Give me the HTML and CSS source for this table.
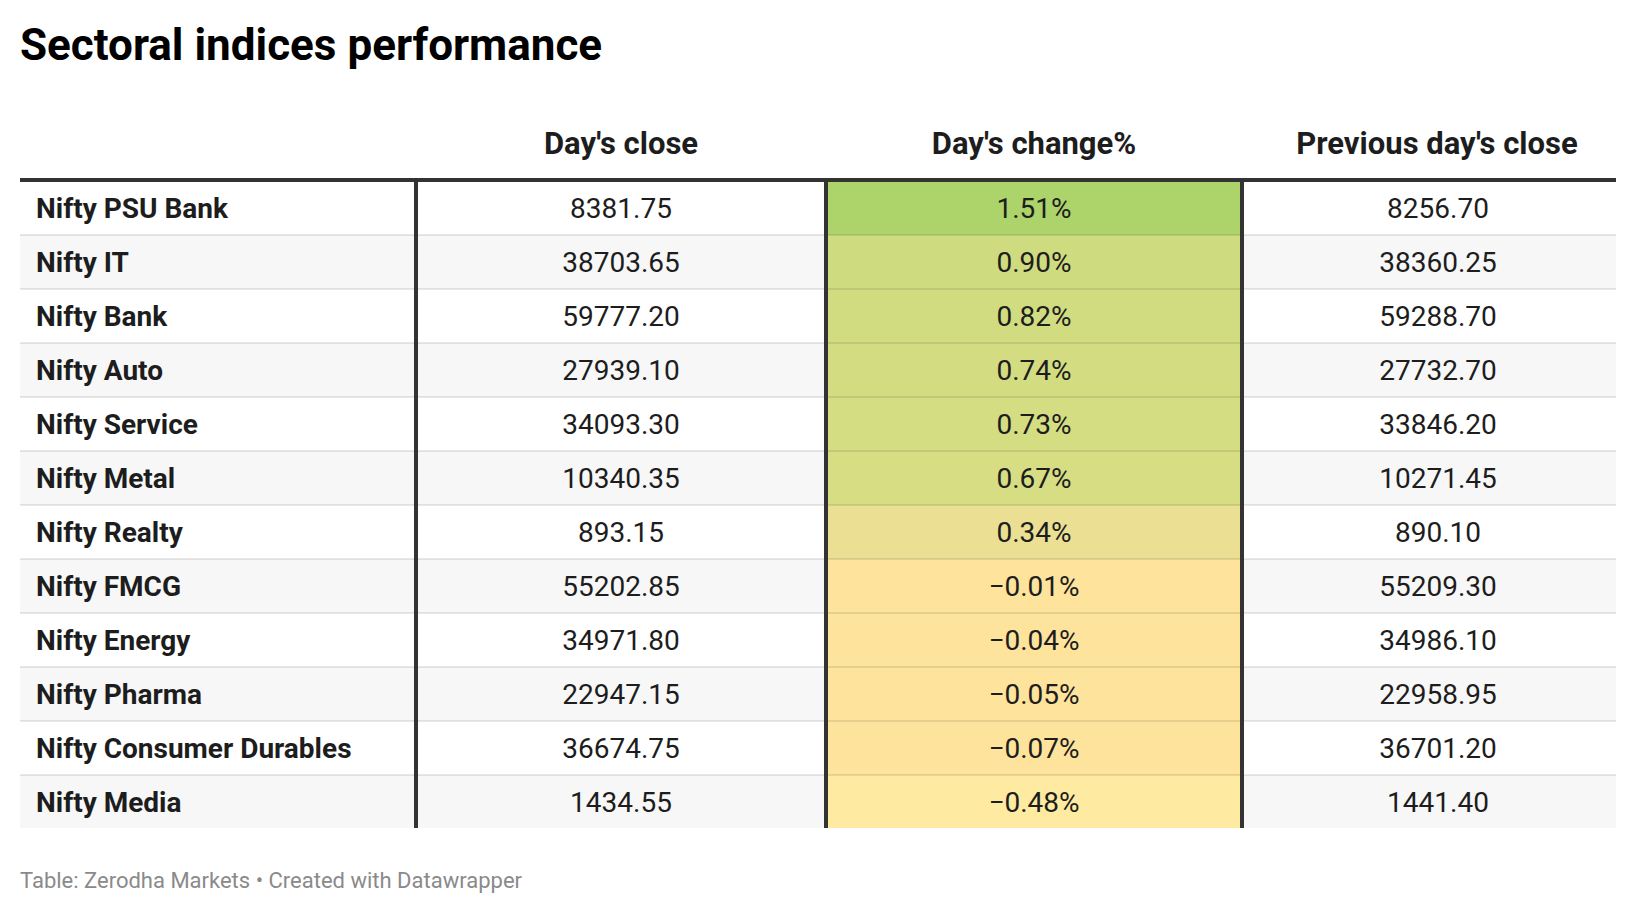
FILE: index.html
```html
<!DOCTYPE html>
<html lang="en">
<head>
<meta charset="utf-8">
<title>Sectoral indices performance</title>
<link rel="stylesheet" href="styles.css">
</head>
<body>
<div class="chart">
  <h1 class="title">Sectoral indices performance</h1>
  <table class="tbl">
    <colgroup>
      <col class="c-name">
      <col class="c-close">
      <col class="c-change">
      <col class="c-prev">
    </colgroup>
    <thead>
      <tr>
        <th class="h-name"></th>
        <th>Day's close</th>
        <th>Day's change%</th>
        <th class="h-prev">Previous day's close</th>
      </tr>
    </thead>
    <tbody>
      <tr><td class="name">Nifty PSU Bank</td><td class="num">8381.75</td><td class="chg g1">1.51%</td><td class="num prev">8256.70</td></tr>
      <tr><td class="name">Nifty IT</td><td class="num">38703.65</td><td class="chg g2">0.90%</td><td class="num prev">38360.25</td></tr>
      <tr><td class="name">Nifty Bank</td><td class="num">59777.20</td><td class="chg g3">0.82%</td><td class="num prev">59288.70</td></tr>
      <tr><td class="name">Nifty Auto</td><td class="num">27939.10</td><td class="chg g4">0.74%</td><td class="num prev">27732.70</td></tr>
      <tr><td class="name">Nifty Service</td><td class="num">34093.30</td><td class="chg g5">0.73%</td><td class="num prev">33846.20</td></tr>
      <tr><td class="name">Nifty Metal</td><td class="num">10340.35</td><td class="chg g6">0.67%</td><td class="num prev">10271.45</td></tr>
      <tr><td class="name">Nifty Realty</td><td class="num">893.15</td><td class="chg g7">0.34%</td><td class="num prev">890.10</td></tr>
      <tr><td class="name">Nifty FMCG</td><td class="num">55202.85</td><td class="chg g8">&minus;0.01%</td><td class="num prev">55209.30</td></tr>
      <tr><td class="name">Nifty Energy</td><td class="num">34971.80</td><td class="chg g8">&minus;0.04%</td><td class="num prev">34986.10</td></tr>
      <tr><td class="name">Nifty Pharma</td><td class="num">22947.15</td><td class="chg g8">&minus;0.05%</td><td class="num prev">22958.95</td></tr>
      <tr><td class="name">Nifty Consumer Durables</td><td class="num">36674.75</td><td class="chg g8">&minus;0.07%</td><td class="num prev">36701.20</td></tr>
      <tr><td class="name">Nifty Media</td><td class="num">1434.55</td><td class="chg g9">&minus;0.48%</td><td class="num prev">1441.40</td></tr>
    </tbody>
  </table>
  <p class="footer">Table: Zerodha Markets &bull; Created with Datawrapper</p>
</div>
</body>
</html>
```

FILE: styles.css
```css
html, body {
  margin: 0;
  padding: 0;
  background: #ffffff;
}

body {
  font-family: Roboto, "Liberation Sans", Arial, sans-serif;
  color: #1d1d1d;
}

.chart {
  padding: 19px 20px 0 20px;
}

.title {
  margin: 0;
  font-size: 44px;
  font-weight: 700;
  line-height: normal;
  color: #000000;
}

.tbl {
  margin-top: 54px;
  width: 1596px;
  border-collapse: collapse;
  table-layout: fixed;
}

.c-name { width: 396px; }
.c-close { width: 410px; }
.c-change { width: 416px; }
.c-prev { width: 374px; }

.tbl th {
  font-size: 31px;
  font-weight: 700;
  line-height: normal;
  text-align: center;
  padding: 0 0 16px 0;
  color: #1d1d1d;
  border-bottom: 4px solid #333333;
}

.tbl th.h-prev {
  padding-left: 16px;
}

.tbl td {
  height: 52px;
  padding: 0;
  font-size: 28px;
  line-height: normal;
  text-align: center;
  border-bottom: 2px solid rgba(0, 0, 0, 0.09);
  box-sizing: content-box;
}

.tbl tbody tr:nth-child(even) td {
  background: #f7f7f7;
}

.tbl tbody tr:last-child td {
  border-bottom: none;
}

.tbl td.name {
  text-align: left;
  font-weight: 700;
  padding-left: 16px;
}

.tbl td.num,
.tbl td.chg {
  border-left: 4px solid #333333;
}

.tbl td.prev {
  padding-left: 16px;
}

.tbl tbody tr td.g1 { background: #add36b; }
.tbl tbody tr td.g2 { background: #cfdb7f; }
.tbl tbody tr td.g3 { background: #d1dc80; }
.tbl tbody tr td.g4 { background: #d3dc81; }
.tbl tbody tr td.g5 { background: #d4dd82; }
.tbl tbody tr td.g6 { background: #d6dd83; }
.tbl tbody tr td.g7 { background: #eadf92; }
.tbl tbody tr td.g8 { background: #fde39c; }
.tbl tbody tr td.g9 { background: #feeaa0; }

.footer {
  margin: 40px 0 0 0;
  font-size: 22px;
  line-height: normal;
  color: #8a8a8a;
}
```
